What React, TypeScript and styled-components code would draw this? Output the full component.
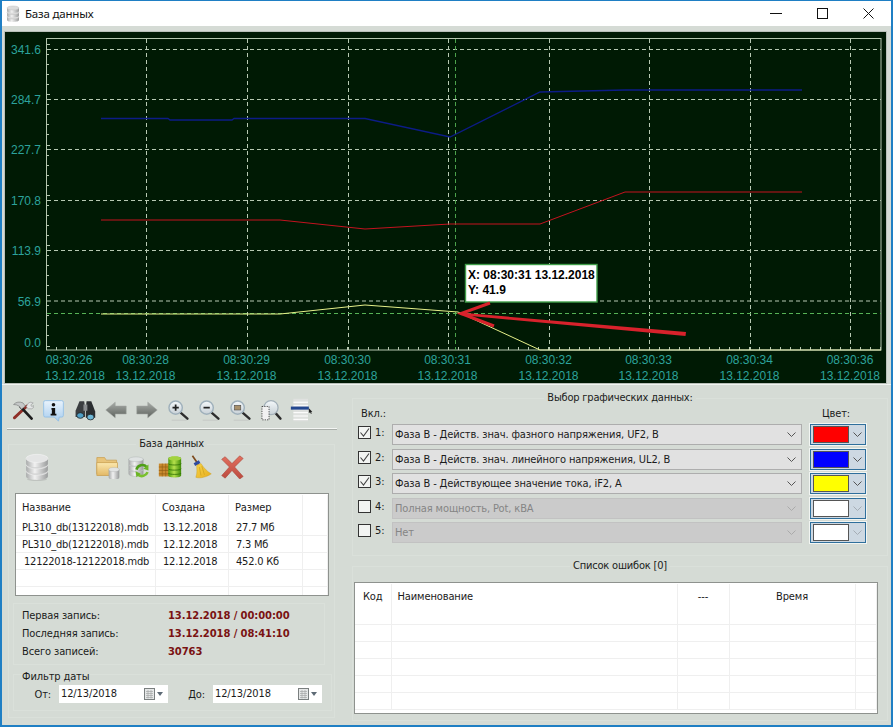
import React from "react";
import styled, { createGlobalStyle } from "styled-components";

const UI = `"DejaVu Sans Condensed", "Noto Sans", "Liberation Sans", sans-serif`;

const Global = createGlobalStyle`
  html, body { margin: 0; padding: 0; background: #d5dbd5; }
  * { box-sizing: border-box; }
`;

const Win = styled.div`
  width: 893px; height: 727px; overflow: hidden;
  border: 2px solid #1f7fc4; border-top-width: 1px; border-right-width: 2px;
  background: #d5dbd5; font: 11px ${UI}; color: #1b1b1b; letter-spacing: -0.12px;
  display: flex; flex-direction: column;
`;
const TitleBar = styled.div`
  height: 25px; flex: none; background: #fff; display: flex; align-items: center; padding-left: 3px;
`;
const TitleText = styled.span`
  font: 11.5px "Noto Sans", sans-serif; margin-left: 4px; color: #111; flex: 1; letter-spacing: -0.2px;
`;
const WinBtn = styled.div`
  width: 46px; height: 25px; display: flex; align-items: center; justify-content: center;
`;
const ChartWrap = styled.div`
  margin: 6px 5px 0 3px; height: 351px; flex: none; background: #001a04; line-height: 0; letter-spacing: 0;
  outline: 1px solid #b9c0b9;
`;
const Bottom = styled.div`
  flex: 1; display: flex; min-height: 0; border-top: 1px solid #f1f4f1; margin-top: 1px;
`;
const LeftCol = styled.div`
  width: 346px; flex: none; padding: 11px 0 0 5px;
`;
const Toolbar = styled.div`
  display: flex; height: 28px;
`;
const ToolBtn = styled.div`
  width: 31px; height: 28px; display: flex; align-items: center; justify-content: center;
`;
const Rule = styled.div`
  height: 2px; margin: 4px 0 0 0; width: 330px; background: #f4f6f4; border-bottom: 1px solid #a9aea9;
`;
const Group = styled.fieldset<{ $w: number; $mt: number; $h: number; $ml?: number }>`
  width: ${p => p.$w}px; height: ${p => p.$h}px; margin: ${p => p.$mt}px 0 0 ${p => p.$ml ?? 0}px;
  padding: 0; border: 1px solid #dae0da; min-width: 0;
`;
const Legend = styled.legend`
  padding: 0 3px; margin: 0 auto; font-size: 11px; line-height: 14px; color: #1b1b1b; letter-spacing: -0.2px;
`;
const IconRow = styled.div`
  display: flex; align-items: center; height: 34px; margin-top: -1px; padding-left: 15px;
`;
const DbSlot = styled.div`
  width: 68px; flex: none; line-height: 0;
`;
const IconSlot = styled.div`
  width: 31px; flex: none; line-height: 0; display: flex; justify-content: center;
`;
const TableBox = styled.div<{ $w: number; $h: number; $ml: number; $mt: number }>`
  width: ${p => p.$w}px; height: ${p => p.$h}px; margin: ${p => p.$mt}px 0 0 ${p => p.$ml}px;
  background: #fff; border: 1px solid #8e928e; overflow: hidden;
`;
const HeadRow = styled.div<{ $cols: string; $h: number }>`
  display: grid; grid-template-columns: ${p => p.$cols}; height: ${p => p.$h}px;
`;
const HeadCell = styled.div<{ $center?: boolean; $pad?: number }>`
  display: flex; align-items: center; justify-content: ${p => (p.$center ? "center" : "flex-start")};
  padding-left: ${p => p.$pad ?? 6}px; border-right: 1px solid #efefef; white-space: nowrap; margin-top: 1px; padding-bottom: 0;
`;
const BodyRow = styled.div<{ $cols: string }>`
  display: grid; grid-template-columns: ${p => p.$cols}; height: 17px; border-bottom: 1px solid #efefef;
`;
const BodyCell = styled.div<{ $pad?: number }>`
  padding-left: ${p => p.$pad ?? 7}px; border-right: 1px solid #efefef; line-height: 18px; white-space: nowrap; letter-spacing: -0.22px;
`;
const InfoBox = styled.div`
  margin: 7px 0 0 4px; width: 312px; height: 62px; border: 1px solid #dae0da; padding: 2px 0 0 8px;
`;
const InfoRow = styled.div`
  display: flex; height: 18px; align-items: center;
`;
const InfoLabel = styled.div`
  width: 146px;
`;
const InfoValue = styled.div`
  font: bold 10px "DejaVu Sans", sans-serif; color: #7a1212; letter-spacing: -0.1px;
`;
const Filter = styled.div`
  margin: 9px 0 0 4px; width: 319px; height: 37px; border: 1px solid #dae0da; padding-left: 8px;
`;
const FilterTitle = styled.div`
  line-height: 14px; margin-top: -5px;
`;
const FilterRow = styled.div`
  display: flex; align-items: center; margin-top: 1px;
`;
const FilterLabel = styled.div<{ $w: number }>`
  width: ${p => p.$w}px; text-align: right; padding-right: 8px; flex: none;
`;
const DateInput = styled.div`
  width: 109px; height: 18px; background: #fff; display: flex; align-items: center; padding: 0 4px 0 2px; flex: none;
  justify-content: space-between; line-height: 0;
`;
const DateText = styled.span`
  line-height: 16px;
`;
const RightCol = styled.div`
  flex: 1; padding: 6px 0 0 4px; min-width: 0;
`;
const SelectGroup = styled.fieldset`
  margin: 0; padding: 0; border: 1px solid #dae0da; width: 536px; height: 165px; min-width: 0;
`;
const ColHead = styled.div`
  display: flex; justify-content: space-between; padding: 0 37px 0 8px; height: 15px; line-height: 15px; margin-top: 1px;
`;
const Rows = styled.div`
  display: flex; flex-direction: column; gap: 3.5px; margin-top: 3px;
`;
const SelRow = styled.div`
  display: flex; align-items: flex-start; height: 21px; padding-left: 5px;
`;
const Check = styled.div`
  width: 13px; height: 13px; margin-top: 2px; border: 1px solid #333; background: #f2f4f2; flex: none; line-height: 0;
`;
const CheckNum = styled.div`
  width: 21px; padding-left: 4px; flex: none; line-height: 15px; margin-top: 1px;
`;
const Combo = styled.div<{ $off: boolean }>`
  width: 410px; height: 21px; flex: none; display: flex; align-items: center; justify-content: space-between; padding: 0 5px 0 2px;
  background: ${p => (p.$off ? "#cbcbcb" : "#e1e1e1")}; border: 1px solid ${p => (p.$off ? "#c2c2c2" : "#adadad")};
  color: ${p => (p.$off ? "#858585" : "#1b1b1b")}; white-space: nowrap;
`;
const ColorPick = styled.div`
  width: 56px; height: 21px; margin-left: 8px; flex: none; display: flex; border: 1px solid #2f6f9c; outline: 1px solid #f2f5f2; background: #cdd8e2;
`;
const Swatch = styled.div<{ $c: string }>`
  width: 36px; height: 17px; margin: 1px 0 0 2px; background: ${p => p.$c}; border: 1px solid #555; flex: none;
`;
const ColorArrow = styled.div`
  flex: 1; display: flex; align-items: center; justify-content: center; line-height: 0;
`;
const ErrGroup = styled.fieldset`
  margin: 3px 0 0 0; padding: 0; border: 1px solid #dae0da; width: 536px; height: 162px; min-width: 0;
`;

const W = 881, H = 351, OX = 5, OY = 32;
const X = (x: number) => x - OX;
const Y = (y: number) => y - OY;
const pts = (a: number[][]) => a.map(([x, y]) => `${X(x)},${Y(y)}`).join(" ");

const yLabels: [string, number][] = [["341.6", 49.5], ["284.7", 99.5], ["227.7", 149.5], ["170.8", 200.5], ["113.9", 250.5], ["56.9", 301], ["0.0", 342]];
const vGrid = [146.5, 247.5, 348.5, 448.5, 549.5, 649.5, 750.5, 850.5];
const xLabels: [string, number, number][] = [
  ["08:30:26", 69, 75], ["08:30:28", 145.5, 145.5], ["08:30:29", 246.5, 246.5], ["08:30:30", 347.5, 347.5], ["08:30:31", 447.5, 447.5],
  ["08:30:32", 548.5, 548.5], ["08:30:33", 648.5, 648.5], ["08:30:34", 749.5, 749.5], ["08:30:36", 850, 850],
];

const Chart = () => {
  const ticksL: number[] = [];
  for (let y = 44; y < 350; y += 10.05) ticksL.push(y);
  const ticksB: number[] = [];
  for (let x = 56; x < 881; x += 10.05) ticksB.push(x);
  const teal = "#2ca39c";
  const grid = "#b7c9b3";
  return (
    <svg width={W} height={H} viewBox={`0 0 ${W} ${H}`}>
      <rect width={W} height={H} fill="#001a04" />
      <rect x={X(46.5)} y={Y(38.5)} width={834.5} height={311.5} fill="none" stroke="#b5c6af" strokeWidth="1" />
      {ticksL.map((y, i) => <line key={i} x1={X(46.5)} x2={X(i % 5 === 0 ? 50 : 49)} y1={Y(Math.round(y) + .5)} y2={Y(Math.round(y) + .5)} stroke="#b5c6af" />)}
      {ticksB.map((x, i) => <line key={i} x1={X(Math.round(x) + .5)} x2={X(Math.round(x) + .5)} y1={Y(350)} y2={Y(347)} stroke="#b5c6af" />)}
      {yLabels.slice(0, 6).map(([, y], i) => <line key={i} x1={X(47)} x2={X(881)} y1={Y(y)} y2={Y(y)} stroke={grid} strokeDasharray="4 3" />)}
      {vGrid.map((x, i) => <line key={i} x1={X(x)} x2={X(x)} y1={Y(39)} y2={Y(350)} stroke={grid} strokeDasharray="4 3" />)}
      <line x1={X(455.5)} x2={X(455.5)} y1={Y(39)} y2={Y(350)} stroke="#4ca34c" strokeDasharray="4 3" />
      <line x1={X(47)} x2={X(881)} y1={Y(313.5)} y2={Y(313.5)} stroke="#56b356" strokeDasharray="4 3" />
      <polyline points={pts([[101, 118.5], [168, 118.5], [170, 120], [232, 120], [234, 118.5], [365, 118.5], [450, 137], [540, 92], [625, 90], [802, 90]])} fill="none" stroke="#0c1c86" strokeWidth="1.3" />
      <polyline points={pts([[101, 220], [280, 220], [365, 229], [450, 224], [540, 224], [625, 192], [802, 192]])} fill="none" stroke="#c4121f" strokeWidth="1" />
      <polyline points={pts([[101, 314], [280, 314], [365, 305], [458, 312], [540, 350]])} fill="none" stroke="#e6f08a" strokeWidth="1" />
      <line x1={X(540)} x2={X(881)} y1={Y(350)} y2={Y(350)} stroke="#e8efb5" />
      {yLabels.map(([t, y]) => <text key={t} x={X(41)} y={Y(y + 4.5)} textAnchor="end" fontFamily="Liberation Sans" fontSize="12" fill={teal}>{t}</text>)}
      {xLabels.map(([t, a, b]) => (
        <g key={t} fontFamily="Liberation Sans" fontSize="12" fill={teal} textAnchor="middle">
          <text x={X(a)} y={Y(364)}>{t}</text>
          <text x={X(b)} y={Y(379.5)}>13.12.2018</text>
        </g>
      ))}
      <rect x={X(465.5)} y={Y(264.5)} width={131.5} height={37.5} fill="#fff" stroke="#3f9f49" strokeWidth="1.4" />
      <text x={X(468)} y={Y(279)} fontFamily="Liberation Sans" fontWeight="bold" fontSize="12" fill="#000">X: 08:30:31 13.12.2018</text>
      <text x={X(468)} y={Y(294)} fontFamily="Liberation Sans" fontWeight="bold" fontSize="12" fill="#000">Y: 41.9</text>
      <polygon points={pts([[460, 312.5], [686, 332], [685.5, 336], [460, 315]])} fill="#d8222c" />
      <polyline points={pts([[490, 303], [461, 313.5], [494, 326]])} fill="none" stroke="#d8222c" strokeWidth="3" />
    </svg>
  );
};

const Ico = ({ children, s = 22 }: { children: React.ReactNode; s?: number }) => (
  <svg width={s} height={s} viewBox="0 0 28 28">{children}</svg>
);

const Defs = () => (
  <svg width="0" height="0" style={{ position: "absolute" }}>
    <defs>
      <linearGradient id="silver" x1="0" x2="1" y1="0" y2="0">
        <stop offset="0" stopColor="#a9abab" /><stop offset=".4" stopColor="#f1f1f1" /><stop offset="1" stopColor="#9a9c9c" />
      </linearGradient>
      <linearGradient id="grayA" x1="0" x2="0" y1="0" y2="1">
        <stop offset="0" stopColor="#a8aca8" /><stop offset="1" stopColor="#5d625d" />
      </linearGradient>
      <linearGradient id="lens" x1="0" x2="0" y1="0" y2="1">
        <stop offset="0" stopColor="#f4f8fa" /><stop offset="1" stopColor="#c7d0d6" />
      </linearGradient>
      <linearGradient id="bubble" x1="0" x2="0" y1="0" y2="1">
        <stop offset="0" stopColor="#e9f3fc" /><stop offset="1" stopColor="#a8cdee" />
      </linearGradient>
      <linearGradient id="folder" x1="0" x2="0" y1="0" y2="1">
        <stop offset="0" stopColor="#fbe7ae" /><stop offset="1" stopColor="#e2b865" />
      </linearGradient>
      <linearGradient id="greenC" x1="0" x2="1" y1="0" y2="0">
        <stop offset="0" stopColor="#4d9a0e" /><stop offset=".45" stopColor="#b5e04c" /><stop offset="1" stopColor="#3f8a08" />
      </linearGradient>
      <linearGradient id="redX" x1="0" x2="0" y1="0" y2="1">
        <stop offset="0" stopColor="#e2705f" /><stop offset="1" stopColor="#bb4a3f" />
      </linearGradient>
      <linearGradient id="broom" x1="0" x2="1" y1="0" y2="1">
        <stop offset="0" stopColor="#f6d44a" /><stop offset="1" stopColor="#e7ad1d" />
      </linearGradient>
    </defs>
  </svg>
);

const Tools = () => (
  <Ico>
    <path d="M3 24 L19 9" stroke="#8f2f28" strokeWidth="3.6" strokeLinecap="round" />
    <path d="M18 10 L21 5 q3 -2 6 0 l-3 2.5 1 2 3 -1 q0 3 -3 4 l-4 0z" fill="#e2e4e4" stroke="#8d8f8f" strokeWidth=".7" />
    <path d="M25 25 L11 10" stroke="#1d1d1d" strokeWidth="3.4" strokeLinecap="round" />
    <path d="M2 7 q5 -5 12 -2 l3 4 -5 4 -3 -4 q-3 -2 -7 -2z" fill="#c5c8c8" stroke="#6c6e6e" strokeWidth=".7" />
  </Ico>
);
const Info = () => (
  <Ico s={23}>
    <path d="M4 2 H24 q2 0 2 2 V20 q0 2 -2 2 H21 L20 27 L15 22 H4 q-2 0 -2 -2 V4 q0 -2 2 -2z" fill="url(#bubble)" stroke="#8dbde6" />
    <circle cx="14" cy="7" r="2.2" fill="#111" />
    <path d="M11.5 11 H16 V18 H17.5 V20 H10.5 V18 H12 V13 H11.5z" fill="#111" />
  </Ico>
);
const Binoc = () => (
  <Ico>
    <path d="M7 3 h6 l1 8 v12 h-12 v-8z" fill="#3a3d40" />
    <path d="M16 3 h6 l5 13 v8 h-12 v-13z" fill="#2b2e31" />
    <rect x="12" y="7" width="5" height="8" fill="#8a8d90" />
    <ellipse cx="8" cy="21" rx="4.5" ry="3.6" fill="#4f9ec4" stroke="#1f2326" />
    <ellipse cx="21" cy="23" rx="4.5" ry="3.6" fill="#6fb7d6" stroke="#1f2326" />
  </Ico>
);
const ArrowL = () => (
  <Ico><path d="M1 14 L13 4 V9 H27 V19 H13 V24z" fill="url(#grayA)" stroke="#9da19d" strokeWidth=".7" /></Ico>
);
const ArrowR = () => (
  <Ico><path d="M27 14 L15 4 V9 H1 V19 H15 V24z" fill="url(#grayA)" stroke="#9da19d" strokeWidth=".7" /></Ico>
);
const Mag = ({ children }: { children?: React.ReactNode }) => (
  <Ico>
    <path d="M6 27 H25" stroke="#b9bdb9" strokeWidth="1.2" opacity=".6" />
    <path d="M18 18 L26 25" stroke="#2c2c2c" strokeWidth="3" strokeLinecap="round" />
    <circle cx="11" cy="11" r="8.5" fill="url(#lens)" stroke="#9fb0bb" strokeWidth="1.8" />
    {children}
  </Ico>
);
const ZoomSel = () => (
  <Ico>
    <path d="M19 17 L26 25" stroke="#2c2c2c" strokeWidth="3" strokeLinecap="round" />
    <circle cx="14" cy="11" r="9" fill="url(#lens)" stroke="#a2afb8" strokeWidth="1.6" />
    <rect x="2.5" y="9.5" width="9" height="17" fill="#f2f2f2" stroke="#222" strokeDasharray="1.5 1.5" />
  </Ico>
);
const LineIc = () => (
  <Ico s={24}>
    <rect x="4" y="1" width="17" height="26" fill="#dfe1df" />
    {[5, 9, 13, 17, 21, 25].map(y => <line key={y} x1="4" x2="21" y1={y} y2={y} stroke="#fbfbfb" strokeWidth="1.4" />)}
    <rect x="1" y="10" width="21" height="3.6" fill="#23478f" />
    <path d="M22 12 l4 4 -1.4 .2 .9 2 -1.2 .3 -.8 -1.9 -1.5 1z" fill="#222" />
  </Ico>
);
const BigDb = () => (
  <svg width="26" height="29" viewBox="0 0 26 32">
    <ellipse cx="13" cy="29" rx="11" ry="2" fill="#bfc3bf" />
    {[20, 13, 6].map((y, i) => (
      <g key={y}>
        <path d={`M1 ${y} V${y + 6} C1 ${y + 11} 25 ${y + 11} 25 ${y + 6} V${y}z`} fill="url(#silver)" />
        <ellipse cx="13" cy={y} rx="12" ry="4.5" fill={i === 2 ? "#e4e5e5" : "#cfd0d0"} stroke="#f5f5f5" strokeWidth=".6" />
      </g>
    ))}
  </svg>
);
const SmallDb = ({ x, y, r = 4.5 }: { x: number; y: number; r?: number }) => (
  <g>
    <path d={`M${x - r} ${y} V${y + r * 1.5} C${x - r} ${y + r * 2.1} ${x + r} ${y + r * 2.1} ${x + r} ${y + r * 1.5} V${y}z`} fill="url(#silver)" stroke="#9ea3a3" strokeWidth=".4" />
    <ellipse cx={x} cy={y} rx={r} ry={r * .4} fill="#e2e4e4" stroke="#a9adad" strokeWidth=".4" />
  </g>
);
const FolderDb = () => (
  <Ico s={24}>
    <path d="M1 3 H10 L12 6 H24 V22 H1z" fill="#e8c47a" stroke="#c79b4c" strokeWidth=".8" />
    <rect x="1" y="9" width="24" height="15" fill="url(#folder)" stroke="#c79b4c" strokeWidth=".8" />
    <SmallDb x={21} y={17} r={6} />
  </Ico>
);
const RefreshDb = () => (
  <Ico s={24}>
    {[15, 9, 3].map(y => <g key={y}><path d={`M2 ${y + 2} V${y + 7} C2 ${y + 11} 19 ${y + 11} 19 ${y + 7} V${y + 2}z`} fill="url(#silver)" stroke="#a0a6a6" strokeWidth=".4" /><ellipse cx="10.5" cy={y + 2} rx="8.5" ry="2.8" fill="#dfe3e3" stroke="#a0a6a6" strokeWidth=".4" /></g>)}
    <path d="M11 17 A7 7 0 0 1 23 14" fill="none" stroke="#4e9e18" strokeWidth="3" />
    <path d="M25 11 L25 18 L19 16z" fill="#6bb525" />
    <path d="M24 20 A7 7 0 0 1 13 23" fill="none" stroke="#79c02e" strokeWidth="3" />
    <path d="M11 26 L10 19 L16 22z" fill="#6bb525" />
  </Ico>
);
const GreenDb = () => (
  <Ico s={24}>
    <rect x="1" y="10" width="13" height="15" fill="#c98a2e" />
    {[14, 18, 22].map(y => <line key={y} x1="1" x2="14" y1={y} y2={y} stroke="#8f5d14" strokeWidth=".8" />)}
    <line x1="5" x2="5" y1="10" y2="25" stroke="#8f5d14" strokeWidth=".7" />
    <line x1="9" x2="9" y1="10" y2="25" stroke="#8f5d14" strokeWidth=".7" />
    <path d="M12 4 C12 1 27 1 27 4 V24 C27 27 12 27 12 24z" fill="url(#greenC)" />
    {[10, 16, 21].map(y => <path key={y} d={`M12 ${y} C12 ${y + 2.2} 27 ${y + 2.2} 27 ${y}`} fill="none" stroke="#2e6d05" strokeWidth=".9" />)}
    <ellipse cx="19.5" cy="4" rx="7.5" ry="2.4" fill="#a3d33f" />
  </Ico>
);
const Broom = () => (
  <Ico s={24}>
    <path d="M4 1 L11 11" stroke="#7d4a1c" strokeWidth="2" />
    <rect x="6" y="8" width="7" height="3.6" fill="#2f4b9f" transform="rotate(-30 9 10)" />
    <path d="M9 12 L14 10 C17 15 22 20 26 22 C22 25 13 28 8 26 C10 21 9 16 9 12z" fill="url(#broom)" stroke="#c89b1a" strokeWidth=".5" />
    <path d="M12 14 L14 24 M15 13 L18 23" stroke="#c89b1a" strokeWidth=".7" />
  </Ico>
);
const RedX = () => (
  <Ico s={24}>
    <path d="M2 5 L6 2 L14 10 L23 1 L27 4 L17 14 L27 25 L23 28 L14 18 L6 27 L2 24 L11 14z" fill="url(#redX)" stroke="#a9483c" strokeWidth=".7" />
  </Ico>
);

const Chevron = ({ c = "#555" }: { c?: string }) => (
  <svg width="9" height="5" viewBox="0 0 9 5"><path d="M.5 .5 L4.5 4.5 L8.5 .5" fill="none" stroke={c} /></svg>
);
const CheckMark = () => (
  <svg width="11" height="11" viewBox="0 0 11 11"><path d="M1.5 5.5 L4.5 9 L10 1.5" fill="none" stroke="#444" strokeWidth="1.1" /></svg>
);
const CalIcon = () => (
  <svg width="20" height="12" viewBox="0 0 20 12">
    <rect x=".5" y=".5" width="10" height="11" fill="#e6e8e8" stroke="#7a7f7f" />
    <path d="M2 3.5 H9 M2 5.5 H9 M2 7.5 H9 M2 9.5 H9 M4 2 V10.5 M7 2 V10.5" stroke="#a3a8a8" strokeWidth=".7" />
    <path d="M13 4 H19 L16 8z" fill="#5d6a75" />
  </svg>
);
const DbTitle = () => (
  <svg width="16" height="18" viewBox="0 0 16 18">
    {[10, 5.5, 1].map(y => <g key={y}><path d={`M2 ${y + 2} V${y + 5} C2 ${y + 7.5} 14 ${y + 7.5} 14 ${y + 5} V${y + 2}z`} fill="url(#silver)" /><ellipse cx="8" cy={y + 2} rx="6" ry="2" fill="#dcdcdc" stroke="#b8b8b8" strokeWidth=".4" /></g>)}
  </svg>
);

const files = [
  ["PL310_db(13122018).mdb", "13.12.2018", "27.7 Мб", 6],
  ["PL310_db(12122018).mdb", "12.12.2018", "7.3 Мб", 6],
  ["12122018-12122018.mdb", "12.12.2018", "452.0 Кб", 8],
  ["", "", "", 6], ["", "", "", 6],
] as const;
const fileCols = "140px 73px 74px 1fr";
const errCols = "36.5px 286px 52px 126px 1fr";
const series = [
  { t: "Фаза В - Действ. знач. фазного напряжения, UF2, В", c: "#ff0000", on: true },
  { t: "Фаза В - Действ. знач. линейного напряжения, UL2, В", c: "#0000ff", on: true },
  { t: "Фаза В - Действующее значение тока, iF2, А", c: "#ffff00", on: true },
  { t: "Полная мощность, Pot, кВА", c: "#ffffff", on: false },
  { t: "Нет", c: "#ffffff", on: false },
];

export default function App() {
  return (
    <Win>
      <Global />
      <Defs />
      <TitleBar>
        <DbTitle />
        <TitleText>База данных</TitleText>
        <WinBtn><svg width="12" height="2"><rect width="12" height="1" fill="#111" /></svg></WinBtn>
        <WinBtn><svg width="11" height="11"><rect x=".5" y=".5" width="10" height="10" fill="none" stroke="#111" /></svg></WinBtn>
        <WinBtn><svg width="11" height="11"><path d="M.5 .5 L10.5 10.5 M10.5 .5 L.5 10.5" stroke="#111" /></svg></WinBtn>
      </TitleBar>
      <ChartWrap><Chart /></ChartWrap>
      <Bottom>
        <LeftCol>
          <Toolbar>
            <ToolBtn><Tools /></ToolBtn>
            <ToolBtn><Info /></ToolBtn>
            <ToolBtn><Binoc /></ToolBtn>
            <ToolBtn><ArrowL /></ToolBtn>
            <ToolBtn><ArrowR /></ToolBtn>
            <ToolBtn><Mag><path d="M7 11 H15 M11 7 V15" stroke="#222" strokeWidth="2.2" /></Mag></ToolBtn>
            <ToolBtn><Mag><path d="M7 11 H15" stroke="#222" strokeWidth="2.2" /></Mag></ToolBtn>
            <ToolBtn><Mag><rect x="7" y="8" width="8" height="6" fill="#a8906a" stroke="#444" strokeWidth=".7" /></Mag></ToolBtn>
            <ToolBtn><ZoomSel /></ToolBtn>
            <ToolBtn><LineIc /></ToolBtn>
          </Toolbar>
          <Rule />
          <Group $w={327} $mt={7} $h={281} $ml={1}>
            <Legend>База данных</Legend>
            <IconRow>
              <DbSlot><BigDb /></DbSlot>
              <IconSlot><FolderDb /></IconSlot>
              <IconSlot><RefreshDb /></IconSlot>
              <IconSlot><GreenDb /></IconSlot>
              <IconSlot><Broom /></IconSlot>
              <IconSlot><RedX /></IconSlot>
            </IconRow>
            <TableBox $w={314} $h={103} $ml={6} $mt={9}>
              <HeadRow $cols={fileCols} $h={25}>
                <HeadCell>Название</HeadCell><HeadCell>Создана</HeadCell><HeadCell>Размер</HeadCell><HeadCell />
              </HeadRow>
              {files.map((f, i) => (
                <BodyRow key={i} $cols={fileCols}>
                  <BodyCell $pad={f[3]}>{f[0]}</BodyCell><BodyCell>{f[1]}</BodyCell><BodyCell>{f[2]}</BodyCell><BodyCell />
                </BodyRow>
              ))}
            </TableBox>
            <InfoBox>
              <InfoRow><InfoLabel>Первая запись:</InfoLabel><InfoValue>13.12.2018 / 00:00:00</InfoValue></InfoRow>
              <InfoRow><InfoLabel>Последняя запись:</InfoLabel><InfoValue>13.12.2018 / 08:41:10</InfoValue></InfoRow>
              <InfoRow><InfoLabel>Всего записей:</InfoLabel><InfoValue>30763</InfoValue></InfoRow>
            </InfoBox>
            <Filter>
              <FilterTitle>Фильтр даты</FilterTitle>
              <FilterRow>
                <FilterLabel $w={37}>От:</FilterLabel>
                <DateInput><DateText>12/13/2018</DateText><CalIcon /></DateInput>
                <FilterLabel $w={45}>До:</FilterLabel>
                <DateInput><DateText>12/13/2018</DateText><CalIcon /></DateInput>
              </FilterRow>
            </Filter>
          </Group>
        </LeftCol>
        <RightCol>
          <SelectGroup>
            <Legend>Выбор графических данных:</Legend>
            <ColHead><span>Вкл.:</span><span>Цвет:</span></ColHead>
            <Rows>
              {series.map((s, i) => (
                <SelRow key={i}>
                  <Check>{s.on && <CheckMark />}</Check>
                  <CheckNum>{i + 1}:</CheckNum>
                  <Combo $off={!s.on}><span>{s.t}</span><Chevron c={s.on ? "#555" : "#aaa"} /></Combo>
                  <ColorPick><Swatch $c={s.c} /><ColorArrow><Chevron c={s.on ? "#555" : "#a5adb5"} /></ColorArrow></ColorPick>
                </SelRow>
              ))}
            </Rows>
          </SelectGroup>
          <ErrGroup>
            <Legend>Список ошибок [0]</Legend>
            <TableBox $w={524} $h={132} $ml={1} $mt={9}>
              <HeadRow $cols={errCols} $h={25}>
                <HeadCell $center $pad={0}>Код</HeadCell><HeadCell>Наименование</HeadCell><HeadCell $center $pad={0}>---</HeadCell><HeadCell $center $pad={0}>Время</HeadCell><HeadCell />
              </HeadRow>
              {[0, 1, 2, 3, 4, 5].map(i => (
                <BodyRow key={i} $cols={errCols}><BodyCell /><BodyCell /><BodyCell /><BodyCell /><BodyCell /></BodyRow>
              ))}
            </TableBox>
          </ErrGroup>
        </RightCol>
      </Bottom>
    </Win>
  );
}
